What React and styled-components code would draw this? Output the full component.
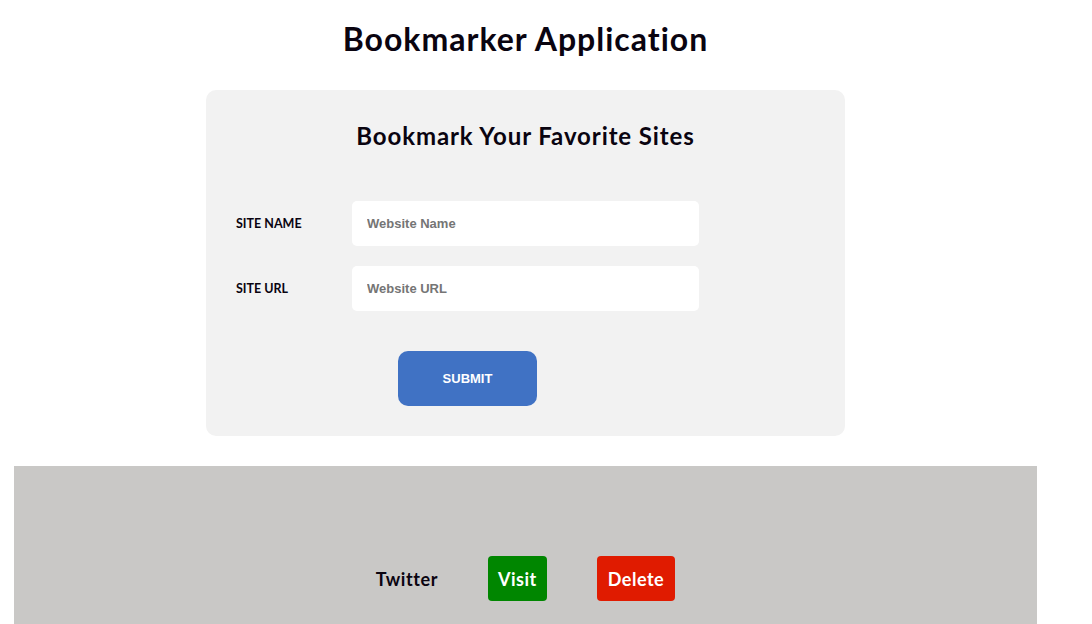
import React from "react";
import styled, { createGlobalStyle } from "styled-components";

const GlobalStyle = createGlobalStyle`
  body {
    margin: 0;
    background: #ffffff;
    font-family: "Lato", "Liberation Sans", sans-serif;
    color: #0a0410;
  }
`;

const Page = styled.div`
  width: 1051px;
  display: flex;
  flex-direction: column;
  align-items: center;
`;

const Title = styled.h1`
  margin: 0;
  padding: 20px 0 0;
  height: 70px;
  box-sizing: border-box;
  font-size: 32px;
  font-weight: 700;
  line-height: 38px;
  letter-spacing: 1px;
`;

const Card = styled.section`
  box-sizing: border-box;
  width: 639px;
  margin-top: 20px;
  padding: 30px 30px 30px;
  height: 346px;
  background-color: #f2f2f2;
  border-radius: 10px;
`;

const CardTitle = styled.h2`
  margin: 0 0 49px;
  text-align: center;
  font-size: 24px;
  font-weight: 700;
  line-height: 32px;
  letter-spacing: 0.9px;
`;

const Row = styled.div`
  display: flex;
  align-items: center;
  margin-bottom: 20px;
`;

const Label = styled.label`
  width: 116px;
  font-size: 12.5px;
  font-weight: 700;
`;

const Input = styled.input`
  box-sizing: border-box;
  width: 347px;
  height: 45px;
  border: none;
  border-radius: 5px;
  background: #ffffff;
  padding: 0 15px;
  font-family: "Liberation Sans", Arial, sans-serif;
  font-size: 13px;
  font-weight: 700;
  outline: none;

  &::placeholder {
    color: #757575;
  }
`;

const Submit = styled.button`
  display: block;
  width: 139px;
  height: 55px;
  margin: 40px 0 0 162px;
  border: none;
  border-radius: 10px;
  background-color: #4072c4;
  color: #ffffff;
  font-family: "Liberation Sans", Arial, sans-serif;
  font-size: 13px;
  font-weight: 700;
`;

const Results = styled.section`
  box-sizing: border-box;
  align-self: stretch;
  margin: 30px 14px 0;
  padding-top: 90px;
  height: 170px;
  background-color: #c9c8c6;
  display: flex;
  justify-content: center;
`;

const Bookmark = styled.div`
  display: flex;
  align-items: center;
  gap: 50px;
  height: 45px;
`;

const SiteName = styled.span`
  font-size: 18px;
  font-weight: 700;
  letter-spacing: 0.6px;
`;

const Action = styled.button`
  height: 45px;
  padding: 0 ${(props) => (props.danger ? "11px" : "10px")};
  border: none;
  border-radius: 4px;
  background-color: ${(props) => (props.danger ? "#e01b00" : "#008600")};
  color: #ffffff;
  font-family: "Lato", "Liberation Sans", sans-serif;
  font-size: 18px;
  font-weight: 700;
  letter-spacing: 0.5px;
`;

export default function App() {
  return (
    <>
      <GlobalStyle />
      <Page>
        <Title>Bookmarker Application</Title>
        <Card>
          <CardTitle>Bookmark Your Favorite Sites</CardTitle>
          <Row>
            <Label>SITE NAME</Label>
            <Input type="text" placeholder="Website Name" />
          </Row>
          <Row>
            <Label>SITE URL</Label>
            <Input type="text" placeholder="Website URL" />
          </Row>
          <Submit>SUBMIT</Submit>
        </Card>
        <Results>
          <Bookmark>
            <SiteName>Twitter</SiteName>
            <Action>Visit</Action>
            <Action danger>Delete</Action>
          </Bookmark>
        </Results>
      </Page>
    </>
  );
}
